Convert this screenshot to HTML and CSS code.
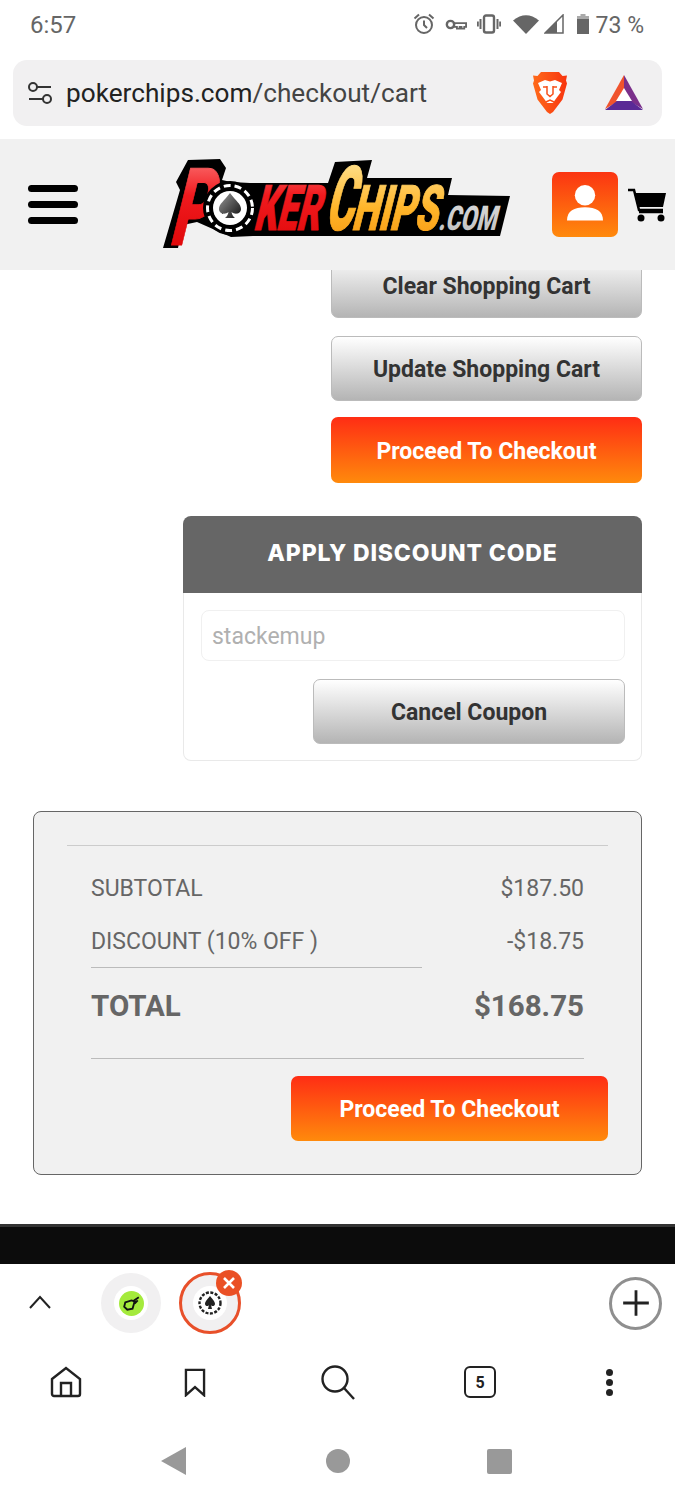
FILE: index.html
```html
<!DOCTYPE html>
<html lang="en">
<head>
<meta charset="utf-8">
<title>Cart</title>
<link rel="stylesheet" href="styles.css">
</head>
<body>
<div class="phone">
  <div class="status">
    <span class="time">6:57</span>
    <div class="status-icons">
      <svg class="ic-alarm" viewBox="0 0 24 24" width="24" height="24"><circle cx="12" cy="13" r="8" fill="none" stroke="#666" stroke-width="2"/><path d="M12 8.500V13l3 3" fill="none" stroke="#666" stroke-width="2"/><path d="M2.500 6.500 7 2.500M21.500 6.500 17 2.500" stroke="#666" stroke-width="2"/></svg>
      <svg class="ic-key" viewBox="0 0 24 14" width="22" height="13"><circle cx="6" cy="7" r="4" fill="none" stroke="#666" stroke-width="2.600"/><path d="M10 5.500h13v4h-2v2h-3v-2h-2v2h-3v-2h-3z" fill="none" stroke="#666" stroke-width="2"/></svg>
      <svg class="ic-vib" viewBox="0 0 24 20" width="24" height="20"><rect x="7" y="1.500" width="10" height="17" rx="2" fill="none" stroke="#666" stroke-width="2.400"/><path d="M3.500 5v10M20.500 5v10M.8 7.500v5M23.200 7.500v5" stroke="#666" stroke-width="2"/></svg>
      <svg class="ic-wifi" viewBox="0 0 26 20" width="26" height="20"><path d="M0 6.500Q13-4 26 6.500L13 20z" fill="#666"/></svg>
      <svg class="ic-signal" viewBox="0 0 20 20" width="20" height="20"><path d="M19 1V19H1z" fill="none" stroke="#666" stroke-width="1.500"/><path d="M13 7V19H1z" fill="#666"/></svg>
      <svg class="ic-batt" viewBox="0 0 12 20" width="12" height="20"><rect x="3.500" y="0" width="5" height="3" fill="#aaa"/><rect x="0" y="2" width="12" height="3" fill="#aaa"/><rect x="0" y="5" width="12" height="15" fill="#666"/></svg>
      <span class="pct">73 %</span>
    </div>
  </div>

  <div class="urlwrap">
    <div class="urlbar">
      <svg class="ic-tune" viewBox="0 0 26 24" width="26" height="24"><circle cx="6" cy="6" r="4" fill="none" stroke="#333" stroke-width="2"/><path d="M10 6h14M2 18h14" stroke="#333" stroke-width="2"/><circle cx="20" cy="18" r="4" fill="none" stroke="#333" stroke-width="2"/></svg>
      <span class="url">pokerchips.com<span class="url-path">/checkout/cart</span></span>
      <svg class="ic-brave" viewBox="0 0 36 44" width="36" height="44"><defs><linearGradient id="brv" x1="0" y1="0" x2="1" y2="0"><stop offset="0" stop-color="#ff6a1a"/><stop offset="1" stop-color="#f8340e"/></linearGradient></defs><path d="M9 1h18l3.500 4 4.500-.5-1 5 1 3-4.500 16L21 41l-3 2-3-2-9.500-12.500L1 12.500l1-3-1-5 4.500.5z" fill="url(#brv)"/><path d="M6 12l7-3 5 1.500L23 9l7 3-3 7 2 2-6 8-2 3h-6l-2-3-6-8 2-2z" fill="#fff"/><path d="M15 15v8l3 2.500 3-2.500v-8M11 16h4M21 16h4M14 31l4-2 4 2" fill="none" stroke="#f8501a" stroke-width="1.500"/></svg>
      <svg class="ic-bat" viewBox="0 0 38 36" width="38" height="36"><path d="M19 0 38 34 19 23z" fill="#7a2f8a"/><path d="M19 0 0 34 19 23z" fill="#f0532d"/><path d="M0 35 12 26h14l12 9z" fill="#5a2a96"/><path d="M19 13 27 26H11z" fill="#fff"/></svg>
    </div>
  </div>

  <header class="site-head">
    <div class="burger"><i></i><i></i><i></i></div>
    <svg class="logo" viewBox="0 0 350 92" width="350" height="92" role="img" aria-label="PokerChips.com">
      <defs>
        <linearGradient id="redg" x1="0" y1="0" x2="0" y2="1"><stop offset="0" stop-color="#ff8f8f"/><stop offset=".4" stop-color="#f01a1e"/><stop offset="1" stop-color="#d80000"/></linearGradient>
        <linearGradient id="orgg" x1="0" y1="0" x2="0" y2="1"><stop offset="0" stop-color="#fff0b0"/><stop offset=".5" stop-color="#ffb52a"/><stop offset="1" stop-color="#f08400"/></linearGradient>
        <linearGradient id="slvg" x1="0" y1="0" x2="0" y2="1"><stop offset="0" stop-color="#fff"/><stop offset="1" stop-color="#a8a8a8"/></linearGradient>
        <linearGradient id="spd" x1="0" y1="0" x2="1" y2="1"><stop offset="0" stop-color="#999"/><stop offset="1" stop-color="#111"/></linearGradient>
      </defs>
      <path d="M2 91 19 33 15 25 27 3 59 2 65 11 61 23 70 25 89 26H167L174 5 211 3 206 21H291L287 38 349 39 339 79H92L70 80 36 65 22 68 17 91z" fill="#000"/>
      <text class="lt" transform="skewX(-14)"><tspan x="29" y="88" class="lt-p" fill="url(#redg)" stroke="url(#redg)" textLength="40" lengthAdjust="spacingAndGlyphs">P</tspan><tspan x="110" y="73" class="lt-s" fill="url(#redg)" stroke="url(#redg)" textLength="66" lengthAdjust="spacingAndGlyphs">KER</tspan><tspan x="181" y="73" class="lt-c" fill="url(#orgg)" stroke="url(#orgg)" textLength="28" lengthAdjust="spacingAndGlyphs">C</tspan><tspan x="208" y="73" class="lt-s" fill="url(#orgg)" stroke="url(#orgg)" textLength="86" lengthAdjust="spacingAndGlyphs">HIPS</tspan><tspan x="295" y="73" class="lt-com" fill="url(#slvg)" textLength="58" lengthAdjust="spacingAndGlyphs">.COM</tspan></text>
      <circle cx="69" cy="51" r="27" fill="#000"/>
      <circle cx="69" cy="51" r="22.500" fill="none" stroke="#fff" stroke-width="3" stroke-dasharray="7 4"/>
      <circle cx="69" cy="51" r="17" fill="#fff"/>
      <path d="M69 36C63 44 58 47 58 52c0 5 6 6 9.500 3-.5 3-2 5-3.500 6h10c-1.500-1-3-3-3.500-6 3.500 3 9.500 2 9.500-3 0-5-5-8-11-16z" fill="url(#spd)"/>
    </svg>
    <div class="user-btn"><svg class="user-ic" viewBox="0 0 40 40" width="48" height="48"><circle cx="20" cy="11" r="8.500" fill="#fff"/><path d="M5 32c0-8 6-11 15-11s15 3 15 11z" fill="#fff"/></svg></div>
    <svg class="cart" viewBox="0 0 40 34" width="40" height="34"><path d="M1 2h6l5 20h24" fill="none" stroke="#000" stroke-width="2.500"/><path d="M8 5h31l-3 14H12z" fill="#000"/><path d="M12 24h24" stroke="#000" stroke-width="2.500"/><circle cx="14" cy="30" r="3.500" fill="#000"/><circle cx="34" cy="30" r="3.500" fill="#000"/></svg>
  </header>

  <main class="content">
    <div class="actions">
      <a class="btn btn-gray btn-wide">Clear Shopping Cart</a>
      <a class="btn btn-gray btn-wide">Update Shopping Cart</a>
      <a class="btn btn-orange btn-wide btn-tall">Proceed To Checkout</a>
    </div>

    <section class="coupon">
      <h2 class="coupon-title">APPLY DISCOUNT CODE</h2>
      <div class="coupon-body">
        <div class="coupon-input">stackemup</div>
        <a class="btn btn-gray btn-cancel">Cancel Coupon</a>
      </div>
    </section>

    <section class="summary">
      <div class="sum-rows">
        <div class="row row-sub"><span>SUBTOTAL</span><span>$187.50</span></div>
        <div class="row row-disc"><span>DISCOUNT (10% OFF )</span><span>-$18.75</span></div>
        <div class="row row-total"><span>TOTAL</span><span>$168.75</span></div>
      </div>
      <a class="btn btn-orange btn-sum">Proceed To Checkout</a>
    </section>
  </main>

  <div class="footer-bar"></div>

  <div class="tabstrip">
    <svg class="chev" viewBox="0 0 24 14" width="24" height="14"><path d="M2 13 12 2l10 11" fill="none" stroke="#222" stroke-width="2"/></svg>
    <div class="tab tab-a"><span class="fav"><svg viewBox="0 0 24 24" width="25" height="25"><circle cx="12" cy="12" r="12" fill="#a4ea3c"/><path d="M6 11l6-2 3 1-2 7-5 1-3-3zM13 10l6-4M15 12l3-3" fill="none" stroke="#111" stroke-width="1.800"/></svg></span></div>
    <div class="tab tab-b"><span class="fav"><svg viewBox="0 0 24 24" width="24" height="24"><circle cx="12" cy="12" r="10.500" fill="#fff" stroke="#222" stroke-width="2.400" stroke-dasharray="3 1.500"/><path d="M12 5c-2 3-5 5-5 8 0 2 3 3 4 1l-1 4h4l-1-4c1 2 4 1 4-1 0-3-3-5-5-8z" fill="#222"/></svg></span>
      <span class="tab-x"><svg viewBox="0 0 14 14" width="14" height="14"><path d="M2 2l10 10M12 2 2 12" stroke="#fff" stroke-width="2.600"/></svg></span>
    </div>
    <div class="tab-plus"><svg viewBox="0 0 24 24" width="28" height="28"><path d="M12 1v22M1 12h22" stroke="#222" stroke-width="2.400"/></svg></div>
  </div>

  <nav class="bottom-nav">
    <svg class="nav-i nav-house" viewBox="0 0 32 32" width="32" height="32"><path d="M2 13 16 2l14 11v15a2 2 0 0 1-2 2H4a2 2 0 0 1-2-2z" fill="none" stroke="#222" stroke-width="2.400"/><path d="M11 30V17h10v13" fill="none" stroke="#222" stroke-width="2.400"/></svg>
    <svg class="nav-i nav-mark" viewBox="0 0 24 32" width="22" height="29"><path d="M2 2h20v28l-10-9-10 9z" fill="none" stroke="#222" stroke-width="2.600"/></svg>
    <svg class="nav-i nav-find" viewBox="0 0 36 36" width="36" height="36"><circle cx="15" cy="15" r="12.500" fill="none" stroke="#222" stroke-width="2.400"/><path d="M24 24l10 11" stroke="#222" stroke-width="2.400"/></svg>
    <div class="tabs-count">5</div>
    <div class="dots"><i></i><i></i><i></i></div>
  </nav>

  <div class="android-nav">
    <span class="nav-back"></span>
    <span class="nav-home"></span>
    <span class="nav-recent"></span>
  </div>
</div>
</body>
</html>
```

FILE: styles.css
```css
* { box-sizing: border-box; }
html, body { margin: 0; padding: 0; background: #fff; }
body { font-family: Roboto, "Liberation Sans", sans-serif; }
.phone { width: 675px; height: 1500px; display: flex; flex-direction: column; overflow: hidden; background: #fff; }

.status { height: 50px; flex: none; display: flex; align-items: center; justify-content: space-between; padding: 0 31px 0 30px; color: #666; }
.time { font-size: 24px; }
.status-icons { display: flex; align-items: center; }
.status-icons svg { position: relative; top: -1px; }
.ic-alarm { margin-right: 9px; margin-left: 1px; }
.ic-key { margin-right: 10px; }
.ic-vib { margin-right: 12px; }
.ic-wifi { margin-right: 5px; }
.ic-signal { margin-right: 13px; }
.ic-batt { margin-right: 7px; }
.pct { font-size: 23px; }

.urlwrap { height: 89px; flex: none; padding: 10px 13px 13px; }
.urlbar { height: 66px; background: #f1f0f1; border-radius: 14px; display: flex; align-items: center; padding: 0 19px 0 14px; }
.ic-tune { flex: none; margin-right: 13px; }
.url { font-size: 26.200px; color: #222; flex: 1; }
.url-path { color: #444; }
.ic-brave { margin-right: 37px; }

.site-head { height: 131px; flex: none; background: #f1f1f1; display: flex; align-items: center; padding: 0 8px 0 28px; position: relative; z-index: 2; }
.burger { width: 51px; display: flex; flex-direction: column; gap: 9px; margin-right: 83px; margin-top: -1px; }
.burger i { display: block; height: 7px; background: #000; border-radius: 4px; }
.logo { flex: none; margin-right: 41px; margin-top: -3px; overflow: visible; }
.lt { font-family: Roboto, "Liberation Sans", sans-serif; font-weight: 900; stroke-width: 1px; }
.lt-p { font-size: 108px; }
.lt-s { font-size: 63px; }
.lt-c { font-size: 90px; }
.lt-com { font-size: 34px; }
.user-btn { width: 66px; height: 65px; flex: none; border-radius: 7px; background: linear-gradient(#fb3412, #ff8a0c); display: flex; align-items: center; justify-content: center; margin-right: 9px; margin-top: -1px; }
.user-ic { margin-top: 3px; }
.cart { flex: none; margin-top: 1px; }

.content { height: 954px; flex: none; overflow: hidden; position: relative; }
.btn { display: flex; align-items: center; justify-content: center; height: 65px; border-radius: 7px; font-weight: 700; font-size: 23px; padding-top: 1px; }
.btn-gray { color: #333; background: linear-gradient(#fff, #b4b4b4); border: 1px solid #bbb; }
.btn-orange { color: #fff; background: linear-gradient(#ff2d14, #ff8a0c); }
.actions { display: flex; flex-direction: column; align-items: flex-end; gap: 18px; margin-top: -17px; padding-right: 33px; }
.btn-wide { width: 311px; }
.btn-tall { height: 66px; margin-top: -2px; padding-top: 2px; }
.coupon { width: 459px; height: 245px; margin: 33px 33px 0 auto; }
.coupon-title { margin: 0; height: 77px; padding-bottom: 3px; background: #666; color: #fff; border-radius: 8px 8px 0 0; display: flex; align-items: center; justify-content: center; font-family: Inter, sans-serif; font-weight: 800; font-size: 23px; letter-spacing: 0.850px; }
.coupon-body { height: 168px; border: 1px solid #e9e9e9; border-top: none; border-radius: 0 0 8px 8px; padding: 17px 16px 0 17px; display: flex; flex-direction: column; align-items: flex-end; }
.coupon-input { width: 100%; height: 51px; border: 1px solid #f0f0f0; border-radius: 8px; color: #b0b0b0; font-size: 23px; display: flex; align-items: center; padding: 1px 0 0 10px; }
.btn-cancel { width: 312px; margin-top: 18px; }

.summary { width: 609px; height: 364px; margin: 50px 0 0 33px; background: #f1f1f1; border: 1px solid #666; border-radius: 8px; padding: 33px 33px 0; display: flex; flex-direction: column; }
.sum-rows { border-top: 1px solid #ccc; padding: 0 24px; height: 214px; }
.row { display: flex; justify-content: space-between; align-items: center; color: #666; font-size: 23px; }
.row-sub { height: 42px; margin-top: 21px; }
.row-disc { height: 41px; margin-top: 12px; position: relative; }
.row-disc::after { content: ""; position: absolute; left: 0; bottom: -6px; width: 331px; border-bottom: 1px solid #bbb; }
.row-total { height: 92px; margin-top: 5px; font-size: 29.500px; font-weight: 700; border-bottom: 1px solid #bbb; padding-bottom: 14px; }
.btn-sum { width: 317px; margin-left: auto; margin-top: 17px; }

.footer-bar { height: 40px; flex: none; background: #0c0c0c; border-top: 3px solid #333; }

.tabstrip { height: 78px; flex: none; display: flex; align-items: center; padding-left: 28px; }
.chev { flex: none; margin-right: 49px; margin-top: -2px; }
.tab { width: 60px; height: 60px; border-radius: 50%; background: #f1f0f1; display: flex; align-items: center; justify-content: center; position: relative; flex: none; }
.tab-a { margin-right: 18px; }
.tab-b { width: 62px; height: 62px; border: 3px solid #e8502a; }
.fav { width: 34px; height: 34px; border-radius: 50%; background: #fff; display: flex; align-items: center; justify-content: center; }
.tab-x { position: absolute; top: -5px; right: -4px; width: 26px; height: 26px; border-radius: 50%; background: #ea5025; display: flex; align-items: center; justify-content: center; }
.tab-plus { margin-left: auto; margin-right: 13px; width: 53px; height: 53px; border: 3px solid #8f8f8f; border-radius: 50%; display: flex; align-items: center; justify-content: center; }

.bottom-nav { height: 80px; flex: none; display: flex; align-items: center; padding-left: 50px; }
.nav-i { flex: none; }
.nav-mark { margin-left: 102px; }
.nav-find { margin-left: 114px; }
.tabs-count { flex: none; margin-left: 108px; width: 32px; height: 32px; border: 2.400px solid #222; border-radius: 6px; display: flex; align-items: center; justify-content: center; font-size: 16px; font-weight: 700; color: #222; }
.dots { flex: none; margin-left: 110px; display: flex; flex-direction: column; gap: 3px; }
.dots i { display: block; width: 7px; height: 7px; background: #222; border-radius: 50%; }

.android-nav { flex: 1; display: flex; align-items: center; padding-left: 161px; }
.nav-back { width: 0; height: 0; border-top: 14px solid transparent; border-bottom: 14px solid transparent; border-right: 25px solid #999; }
.nav-home { width: 24px; height: 24px; border-radius: 50%; background: #999; margin-left: 140px; }
.nav-recent { width: 25px; height: 25px; border-radius: 2px; background: #999; margin-left: 137px; }
```
